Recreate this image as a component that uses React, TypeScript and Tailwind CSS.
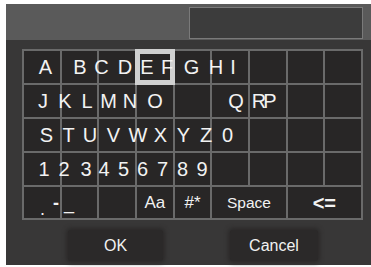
import React from 'react'

// glyph centres (page x) per keyboard row, as they sit in the capture
const rows: [string, number][][] = [
  [['A', 45.5], ['B', 80], ['C', 101.5], ['D', 125], ['E', 147], ['F', 167], ['G', 191.5], ['H', 216], ['I', 233]],
  [['J', 43], ['K', 65], ['L', 87], ['M', 108.5], ['N', 130], ['O', 155], ['Q', 236], ['R', 259], ['P', 270]],
  [['S', 46.5], ['T', 68.5], ['U', 90], ['V', 113.5], ['W', 138], ['X', 160.5], ['Y', 183.5], ['Z', 206], ['0', 227.5]],
  [['1', 44], ['2', 64], ['3', 86], ['4', 104], ['5', 123.5], ['6', 142.5], ['7', 162.5], ['8', 182.5], ['9', 202]],
]

const GRID_LEFT = 22

function Cell({ hl, span2, children }: { hl?: boolean; span2?: boolean; children?: React.ReactNode }) {
  return (
    <div
      className={`flex items-center justify-center bg-[#282626] text-[#f2f2f2] ${span2 ? 'col-span-2' : ''} ${
        hl ? 'relative z-10 border-[3px] border-[#d0d0d0] ring-2 ring-[#d0d0d0] bg-[#242222]' : ''
      }`}
    >
      {children}
    </div>
  )
}

export default function App() {
  return (
    <div className="w-[371px] h-[267px] bg-white pt-[4px] pl-[6px] pb-[2px] overflow-hidden" style={{ fontFamily: '"Liberation Sans", Arial, sans-serif' }}>
      <div className="h-full bg-[#383737] flex flex-col">
        <div className="h-[36px] bg-[#5a5a5a] flex justify-end pt-[3px] pb-[1px] pr-[8px]">
          <div className="w-[174px] h-full bg-[#3c3c3c] border border-[#7a7a7a]" />
        </div>

        <div className="relative mt-[9px] ml-[16px] w-[341px]">
          <div className="grid grid-cols-9 grid-rows-[32px_32px_32px_32px_31px] gap-[2px] p-[2px] bg-[#6a6a6a]">
            {Array.from({ length: 36 }).map((_, i) => (
              <Cell key={i} hl={i === 3} />
            ))}
            <Cell />
            <Cell />
            <Cell />
            <Cell><span className="text-[17px]">Aa</span></Cell>
            <Cell><span className="text-[17px]">#*</span></Cell>
            <Cell span2><span className="text-[15.5px]">Space</span></Cell>
            <Cell span2><span className="text-[20px] font-bold">&lt;=</span></Cell>
          </div>

          <div className="absolute inset-0 z-20 p-[2px] grid grid-rows-[32px_32px_32px_32px_31px] gap-[2px] pointer-events-none text-[#f2f2f2]">
            {rows.map((row, r) => (
              <div key={r} className="relative">
                {row.map(([ch, x]) => (
                  <span
                    key={ch}
                    className="absolute top-0 h-full flex items-center -translate-x-1/2 text-[20px] leading-none"
                    style={{ left: x - GRID_LEFT - 2 }}
                  >
                    {ch}
                  </span>
                ))}
              </div>
            ))}
            <div className="relative text-[18px] leading-none">
              <span className="absolute left-[16px] top-[13px]">.</span>
              <span className="absolute left-[29px] top-[7px] font-bold">-</span>
              <span className="absolute left-[40px] top-[7px]">_</span>
            </div>
          </div>
        </div>

        <div className="mt-[10px] flex">
          <button className="ml-[62px] w-[95px] h-[31px] bg-[#2b2929] rounded-[3px] shadow-[0_0_4px_2px_#2b2929] text-[16px] text-[#f2f2f2]">OK</button>
          <button className="ml-[67px] w-[88px] h-[31px] bg-[#2b2929] rounded-[3px] shadow-[0_0_4px_2px_#2b2929] text-[16px] text-[#f2f2f2]">Cancel</button>
        </div>
      </div>
    </div>
  )
}
